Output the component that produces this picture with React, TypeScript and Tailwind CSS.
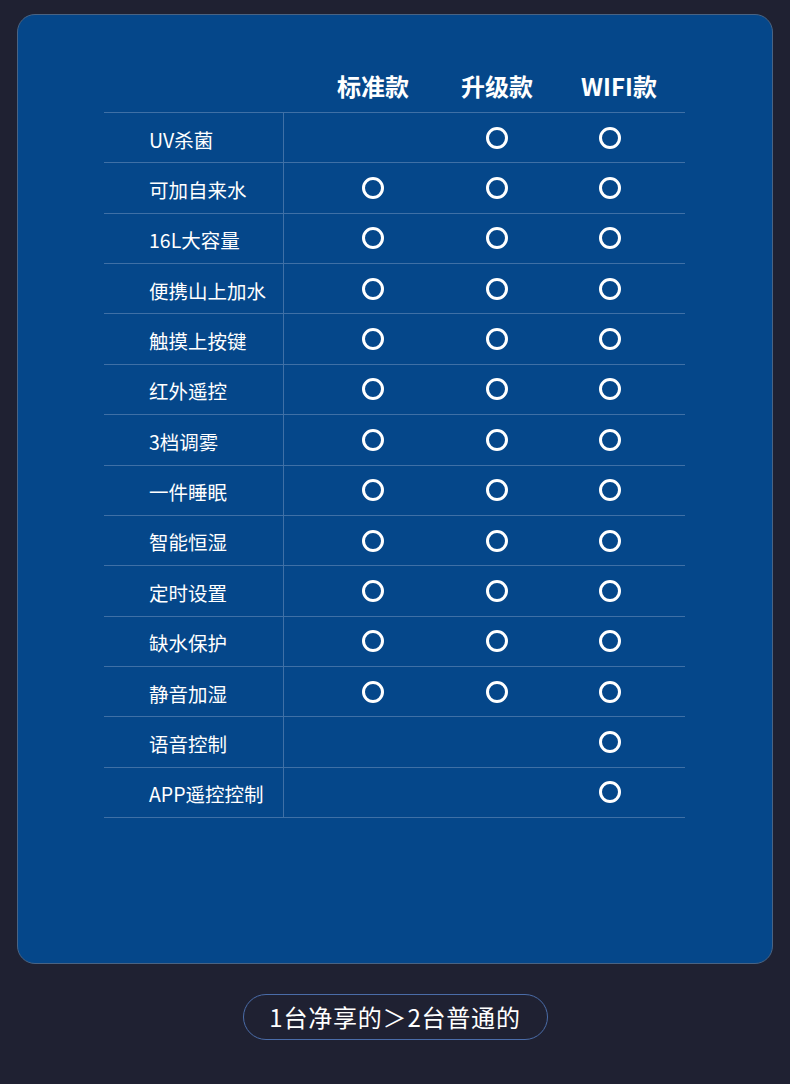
import React from 'react';

const rows: [string, boolean, boolean, boolean][] = [
  ['UV杀菌', false, true, true],
  ['可加自来水', true, true, true],
  ['16L大容量', true, true, true],
  ['便携山上加水', true, true, true],
  ['触摸上按键', true, true, true],
  ['红外遥控', true, true, true],
  ['3档调雾', true, true, true],
  ['一件睡眠', true, true, true],
  ['智能恒湿', true, true, true],
  ['定时设置', true, true, true],
  ['缺水保护', true, true, true],
  ['静音加湿', true, true, true],
  ['语音控制', false, false, true],
  ['APP遥控控制', false, false, true],
];

function Dot({ on }: { on: boolean }) {
  if (!on) return null;
  return <div className="w-[22px] h-[22px] rounded-full border-[3px] border-white" />;
}

export default function App() {
  const font = { fontFamily: '"Noto Sans CJK SC", "Noto Sans", sans-serif' };
  return (
    <div className="w-[790px] h-[1084px] bg-[#1f2132] pt-[14px]" style={font}>
      <div className="ml-[17px] w-[756px] h-[950px] rounded-[18px] bg-[#05478a] border border-[#4a6382] pt-[45px] pl-[86px]">
        <div className="w-[581px]">
          <div className="grid grid-cols-[180px_178px_70px_153px] h-[52px] items-center text-white text-[24px] font-bold">
            <div />
            <div className="flex justify-center">标准款</div>
            <div className="flex justify-center whitespace-nowrap">升级款</div>
            <div className="flex justify-center pl-[21px]">WIFI款</div>
          </div>
          <div className="border-t border-[#3f70a6]">
            {rows.map(([label, a, b, c]) => (
              <div
                key={label}
                className="grid grid-cols-[180px_178px_70px_153px] h-[50.36px] items-center border-b border-[#3f70a6]"
              >
                <div className="h-full flex items-center pl-[45px] pt-[3px] border-r border-[#3f70a6] text-white text-[19.5px]">
                  {label}
                </div>
                <div className="flex justify-center"><Dot on={a} /></div>
                <div className="flex justify-center"><Dot on={b} /></div>
                <div className="flex justify-center pl-[3px]"><Dot on={c} /></div>
              </div>
            ))}
          </div>
        </div>
      </div>
      <div className="flex justify-center mt-[30px]">
        <div className="w-[305px] h-[46px] rounded-full border border-[#4a6ca8] flex items-center justify-center text-white text-[24px] tracking-[0.8px]">
          1台净享的＞2台普通的
        </div>
      </div>
    </div>
  );
}
